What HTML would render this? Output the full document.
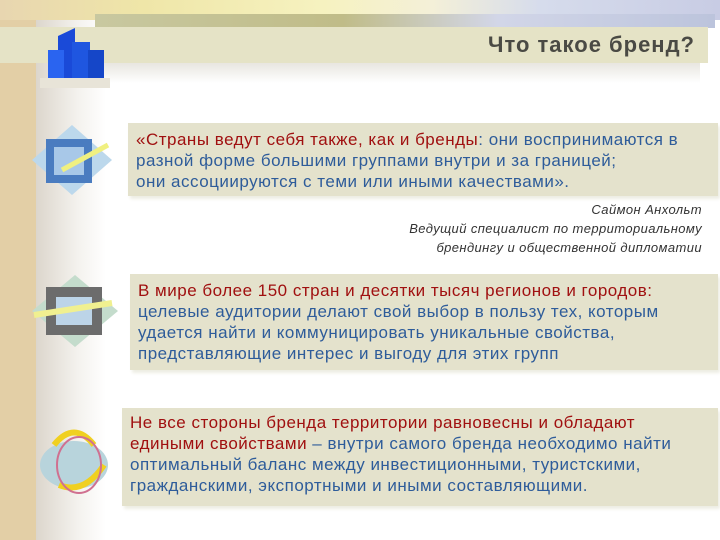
<!DOCTYPE html>
<html><head><meta charset="utf-8"><style>
body{margin:0;width:720px;height:540px;position:relative;overflow:hidden;background:#fff;font-family:"Liberation Sans",sans-serif}
.a{position:absolute}
.box{position:absolute;background:#e4e2cc;font-size:17px;letter-spacing:0.5px;line-height:21px;color:#2e5c9a;padding:0 8px;box-sizing:border-box;box-shadow:2px 3px 3px #eeeee4;white-space:nowrap}
.r{color:#a01010}
</style></head><body>
<div class="a" style="left:0;top:0;width:36px;height:540px;background:#e3cfa6"></div>
<div class="a" style="left:36px;top:0;width:70px;height:540px;background:linear-gradient(90deg,#dcd6cc,#f4f2ee 60%,#fff)"></div>
<div class="a" style="left:0;top:0;width:720px;height:20px;background:linear-gradient(90deg,#e8d6b0 0%,#efe6a8 20%,#f6f2c0 45%,#f4f0d8 60%,#d6dcec 75%,#c8cce4 100%)"></div>
<div class="a" style="left:95px;top:14px;width:620px;height:14px;background:linear-gradient(90deg,#c8c8a0,#c0bc88 40%,#d2d6e8 65%,#bcc4dc)"></div>
<div class="a" style="left:0;top:27px;width:708px;height:36px;background:#e5e3c6"></div>
<div class="a" style="left:80px;top:63px;width:620px;height:20px;background:linear-gradient(180deg,#e8e6e0,#fff)"></div>
<div class="a" style="right:25px;top:32px;font-size:22px;letter-spacing:1px;font-weight:bold;color:#4a4a44">Что такое бренд?</div>
<svg class="a" style="left:40px;top:28px" width="70" height="60"><polygon points="18,8 35,0 35,52 18,52" fill="#1a4ad8"/><rect x="8" y="22" width="16" height="30" fill="#2a64f0"/><rect x="32" y="14" width="18" height="38" fill="#1f56e0"/><rect x="48" y="22" width="16" height="30" fill="#1546c8"/><rect x="0" y="50" width="70" height="10" fill="#e8e4d8"/></svg>
<svg class="a" style="left:32px;top:125px" width="80" height="70"><polygon points="40,0 80,35 40,70 0,35" fill="#bcd8ec"/><rect x="14" y="14" width="46" height="44" fill="#4a7cc0"/><rect x="22" y="22" width="30" height="28" fill="#a8c8e8"/><path d="M30 45 L76 20" stroke="#f0f080" stroke-width="5"/></svg>
<svg class="a" style="left:32px;top:275px" width="86" height="72"><polygon points="43,0 86,36 43,72 0,36" fill="#c4dccc"/><rect x="14" y="12" width="56" height="48" fill="#6c6c6c"/><rect x="24" y="22" width="36" height="28" fill="#bcd4e8"/><path d="M2 40 L80 28" stroke="#f0f090" stroke-width="6"/></svg>
<svg class="a" style="left:34px;top:425px" width="80" height="70"><ellipse cx="40" cy="40" rx="34" ry="24" fill="#b8d4dc"/><path d="M20 20 Q40 -5 60 20" stroke="#f0d020" stroke-width="6" fill="none"/><path d="M25 60 Q50 70 70 40" stroke="#f0d020" stroke-width="6" fill="none"/><ellipse cx="45" cy="40" rx="22" ry="28" stroke="#d07090" stroke-width="2" fill="none"/></svg>
<div class="box" style="left:128px;top:123px;width:590px;height:73px;padding-top:6px"><span class="r">«Страны ведут себя также, как и бренды</span>: они воспринимаются в<br>разной форме большими группами внутри и за границей;<br>они ассоциируются с теми или иными качествами».</div>
<div class="a" style="right:18px;top:200px;text-align:right;font-style:italic;font-size:13px;letter-spacing:0.4px;line-height:19px;color:#333">Саймон Анхольт<br>Ведущий специалист по территориальному<br>брендингу и общественной дипломатии</div>
<div class="box" style="left:130px;top:274px;width:588px;height:96px;padding-top:6px"><span class="r">В мире более 150 стран и десятки тысяч регионов и городов:</span><br>целевые аудитории делают свой выбор в пользу тех, которым<br>удается найти и коммуницировать уникальные свойства,<br>представляющие интерес и выгоду для этих групп</div>
<div class="box" style="left:122px;top:408px;width:596px;height:98px;padding-top:4px"><span class="r">Не все стороны бренда территории равновесны и обладают<br>едиными свойствами</span> – внутри самого бренда необходимо найти<br>оптимальный баланс между инвестиционными, туристскими,<br>гражданскими, экспортными и иными составляющими.</div>
</body></html>
